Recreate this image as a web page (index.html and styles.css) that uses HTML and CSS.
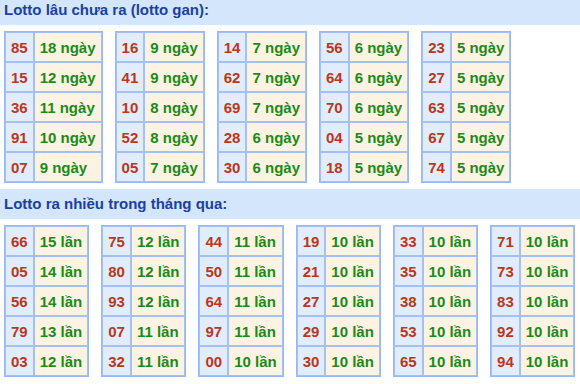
FILE: index.html
```html
<!DOCTYPE html>
<html lang="vi">
<head>
<meta charset="utf-8">
<title>Lotto</title>
<link rel="stylesheet" href="styles.css">
</head>
<body>
<section class="block block-first">
  <h2 class="band">Lotto lâu chưa ra (lotto gan):</h2>
  <div class="tables">
    <table class="lt"><tr><td class="n">85</td><td class="v">18 ngày</td></tr><tr><td class="n">15</td><td class="v">12 ngày</td></tr><tr><td class="n">36</td><td class="v">11 ngày</td></tr><tr><td class="n">91</td><td class="v">10 ngày</td></tr><tr><td class="n">07</td><td class="v">9 ngày</td></tr></table>
    <table class="lt"><tr><td class="n">16</td><td class="v">9 ngày</td></tr><tr><td class="n">41</td><td class="v">9 ngày</td></tr><tr><td class="n">10</td><td class="v">8 ngày</td></tr><tr><td class="n">52</td><td class="v">8 ngày</td></tr><tr><td class="n">05</td><td class="v">7 ngày</td></tr></table>
    <table class="lt"><tr><td class="n">14</td><td class="v">7 ngày</td></tr><tr><td class="n">62</td><td class="v">7 ngày</td></tr><tr><td class="n">69</td><td class="v">7 ngày</td></tr><tr><td class="n">28</td><td class="v">6 ngày</td></tr><tr><td class="n">30</td><td class="v">6 ngày</td></tr></table>
    <table class="lt"><tr><td class="n">56</td><td class="v">6 ngày</td></tr><tr><td class="n">64</td><td class="v">6 ngày</td></tr><tr><td class="n">70</td><td class="v">6 ngày</td></tr><tr><td class="n">04</td><td class="v">5 ngày</td></tr><tr><td class="n">18</td><td class="v">5 ngày</td></tr></table>
    <table class="lt"><tr><td class="n">23</td><td class="v">5 ngày</td></tr><tr><td class="n">27</td><td class="v">5 ngày</td></tr><tr><td class="n">63</td><td class="v">5 ngày</td></tr><tr><td class="n">67</td><td class="v">5 ngày</td></tr><tr><td class="n">74</td><td class="v">5 ngày</td></tr></table>
  </div>
</section>
<section class="block">
  <h2 class="band">Lotto ra nhiều trong tháng qua:</h2>
  <div class="tables">
    <table class="lt"><tr><td class="n">66</td><td class="v">15 lần</td></tr><tr><td class="n">05</td><td class="v">14 lần</td></tr><tr><td class="n">56</td><td class="v">14 lần</td></tr><tr><td class="n">79</td><td class="v">13 lần</td></tr><tr><td class="n">03</td><td class="v">12 lần</td></tr></table>
    <table class="lt"><tr><td class="n">75</td><td class="v">12 lần</td></tr><tr><td class="n">80</td><td class="v">12 lần</td></tr><tr><td class="n">93</td><td class="v">12 lần</td></tr><tr><td class="n">07</td><td class="v">11 lần</td></tr><tr><td class="n">32</td><td class="v">11 lần</td></tr></table>
    <table class="lt"><tr><td class="n">44</td><td class="v">11 lần</td></tr><tr><td class="n">50</td><td class="v">11 lần</td></tr><tr><td class="n">64</td><td class="v">11 lần</td></tr><tr><td class="n">97</td><td class="v">11 lần</td></tr><tr><td class="n">00</td><td class="v">10 lần</td></tr></table>
    <table class="lt"><tr><td class="n">19</td><td class="v">10 lần</td></tr><tr><td class="n">21</td><td class="v">10 lần</td></tr><tr><td class="n">27</td><td class="v">10 lần</td></tr><tr><td class="n">29</td><td class="v">10 lần</td></tr><tr><td class="n">30</td><td class="v">10 lần</td></tr></table>
    <table class="lt"><tr><td class="n">33</td><td class="v">10 lần</td></tr><tr><td class="n">35</td><td class="v">10 lần</td></tr><tr><td class="n">38</td><td class="v">10 lần</td></tr><tr><td class="n">53</td><td class="v">10 lần</td></tr><tr><td class="n">65</td><td class="v">10 lần</td></tr></table>
    <table class="lt"><tr><td class="n">71</td><td class="v">10 lần</td></tr><tr><td class="n">73</td><td class="v">10 lần</td></tr><tr><td class="n">83</td><td class="v">10 lần</td></tr><tr><td class="n">92</td><td class="v">10 lần</td></tr><tr><td class="n">94</td><td class="v">10 lần</td></tr></table>
  </div>
</section>
</body>
</html>
```
FILE: styles.css
```css
html, body {
  margin: 0;
  padding: 0;
  background: #ffffff;
  font-family: "Liberation Sans", Arial, sans-serif;
}

.block-first {
  margin-top: -5px;
}

.band {
  margin: 0;
  height: 30px;
  line-height: 30px;
  padding: 0 4px;
  background: #d4e6fb;
  color: #1a40a3;
  font-size: 15px;
  font-weight: bold;
}

.tables {
  display: flex;
  flex-wrap: wrap;
  gap: 12px;
  padding: 6px 4px 6px;
}

.lt {
  border-collapse: separate;
  border-spacing: 0;
  border: 1px solid #98b8f2;
  font-size: 15px;
  font-weight: bold;
}

.lt td {
  border: 1px solid #a3c1f5;
  height: 28px;
  padding: 0 5px;
  text-align: center;
  vertical-align: middle;
  white-space: nowrap;
  line-height: 17px;
}

.lt .n {
  background: #e1edfd;
  color: #b8381c;
}

.lt .v {
  background: #fdf3e2;
  color: #1b8a1b;
  text-align: left;
}
```
